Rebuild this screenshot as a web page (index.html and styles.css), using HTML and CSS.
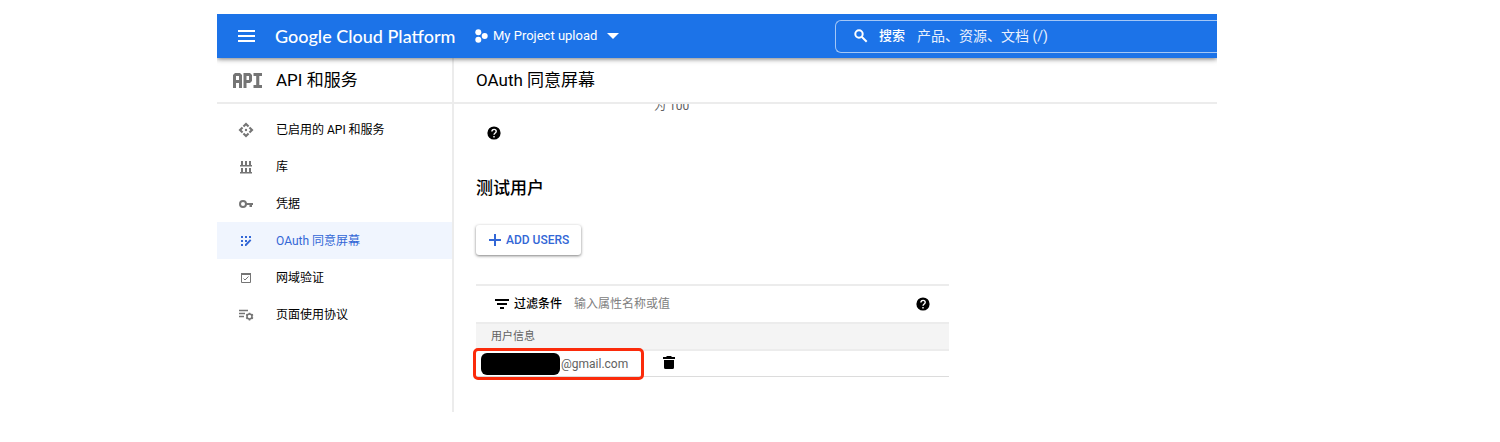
FILE: index.html
```html
<!DOCTYPE html>
<html lang="zh-CN">
<head>
<meta charset="utf-8">
<title>OAuth 同意屏幕</title>
<link rel="stylesheet" href="styles.css">
</head>
<body>
<div class="console">
  <header class="topbar">
    <button class="icon-button menu" aria-label="菜单"><svg width="18" height="14" viewBox="0 0 18 14" fill="currentColor"><path d="M0 1h17v2H0zM0 6h17v2H0zM0 11h17v2H0z"/></svg></button>
    <a class="brand" href="#">Google Cloud Platform</a>
    <button class="project"><svg width="14" height="14" viewBox="0 0 14 14" fill="currentColor"><circle cx="3.300" cy="3.200" r="3"/><circle cx="3.300" cy="10.800" r="3"/><circle cx="9.700" cy="7" r="3"/></svg><span>My Project upload</span><svg class="caret" width="12" height="6" viewBox="0 0 12 6" fill="currentColor"><path d="M0 0h12L6 6z"/></svg></button>
    <div class="search">
      <svg width="14" height="14" viewBox="0 0 14 14" fill="none" stroke="currentColor" stroke-width="2"><circle cx="5" cy="5" r="3.700"/><path d="M7.700 7.700l5 5"/></svg>
      <label for="search">搜索</label>
      <input id="search" type="text" placeholder="产品、资源、文档 (/)">
    </div>
  </header>
  <div class="body">
    <aside class="sidebar">
      <div class="section-title">
        <svg width="30" height="16" viewBox="0 0 30 16" fill="#757575"><path fill-rule="evenodd" d="M0 3l2-2h5l2 2v13H6v-5H3v5H0zM3 4v4h3V4z"/><path fill-rule="evenodd" d="M10.500 1H17l2 2v6l-2 2h-3.500v5h-3zM13.500 4v4H16V4z"/><path d="M20.500 1h8.500v3h-2.700v9H29v3h-8.500v-3h2.700V4h-2.700z"/></svg>
        <h2>API 和服务</h2>
      </div>
      <nav class="nav">
        <a href="#"><svg width="16" height="16" viewBox="0 0 16 16" fill="currentColor"><path d="M8 .5l3.300 3.300-1.500 1.500L8 3.500 6.200 5.300 4.700 3.800zM8 15.500l3.300-3.300-1.500-1.500L8 12.500l-1.800-1.800-1.500 1.500zM.5 8l3.300-3.300 1.500 1.500L3.500 8l1.800 1.800-1.500 1.500zM15.500 8l-3.300-3.300-1.500 1.500L12.500 8l-1.800 1.800 1.500 1.500z"/><circle cx="8" cy="8" r="1.200"/></svg><span>已启用的 API 和服务</span></a>
        <a href="#"><svg width="16" height="16" viewBox="0 0 16 16" fill="currentColor"><path d="M3 2h2v4h2V2h2v4h2V2h2v4h1v1.500H2V6h1zM3 9h2v4h2V9h2v4h2V9h2v4h1v1.500H2V13h1z"/></svg><span>库</span></a>
        <a href="#"><svg width="16" height="16" viewBox="0 0 16 16"><circle cx="5" cy="8" r="3" fill="none" stroke="currentColor" stroke-width="2"/><path d="M7.500 7H15v2h-1v2h-2.500V9h-4z" fill="currentColor"/></svg><span>凭据</span></a>
        <a href="#" class="active" aria-current="page"><svg width="16" height="16" viewBox="0 0 16 16" fill="currentColor"><path d="M3 3h2v2H3zM7 3h2v2H7zM11 3h2v2h-2zM3 7h2v2H3zM7 7h2v2H7zM3 11h2v2H3zM7 11.200L12 6.200l1.400 1.400L8.200 13H7z"/></svg><span>OAuth 同意屏幕</span></a>
        <a href="#"><svg width="16" height="16" viewBox="0 0 16 16" fill="none" stroke="currentColor"><path d="M3.500 3.500h9v9h-9z"/><path d="M3 4h10" stroke-width="2"/><path d="M5.500 8.500L7 10l3.500-3.500"/></svg><span>网域验证</span></a>
        <a href="#"><svg width="16" height="16" viewBox="0 0 16 16" fill="none" stroke="currentColor"><path d="M1 3.500h9M1 6.500h6M1 9.500h5" stroke-width="1.300"/><circle cx="11.500" cy="9.500" r="2.500" stroke-width="1.600"/><path d="M11.500 5.700v1.500M11.500 12v1.500M8.200 7.500l1.300.8M13.600 10.700l1.400.8M8.200 11.500l1.300-.8M13.600 8.300l1.400-.8" stroke-width="1.600"/></svg><span>页面使用协议</span></a>
      </nav>
    </aside>
    <main class="main">
      <div class="page-title"><h1>OAuth 同意屏幕</h1></div>
      <div class="scroll">
        <p class="limit">为 100</p>
        <button class="icon-button help" aria-label="帮助"><svg width="14" height="14" viewBox="0 0 14 14"><circle cx="7" cy="7" r="6.600" fill="#000"/><path d="M4.900 5.500c0-2.900 4.300-2.700 4.300-.1C9.200 7 7 7 7 8.800" fill="none" stroke="#fff" stroke-width="1.400"/><path d="M6.300 10h1.400v1.400H6.300z" fill="#fff"/></svg></button>
        <h2 class="heading">测试用户</h2>
        <button class="add"><svg width="12" height="12" viewBox="0 0 12 12" fill="currentColor"><path d="M5 0h2v5h5v2H7v5H5V7H0V5h5z"/></svg>ADD USERS</button>
        <section class="users">
          <div class="filter">
            <svg width="14" height="10" viewBox="0 0 14 10" fill="currentColor"><path d="M0 0h14v2H0zM2 4h10v2H2zM5 8h4v2H5z"/></svg>
            <label for="filter">过滤条件</label>
            <input id="filter" type="text" placeholder="输入属性名称或值">
            <button class="icon-button" aria-label="帮助"><svg width="14" height="14" viewBox="0 0 14 14"><circle cx="7" cy="7" r="6.600" fill="#000"/><path d="M4.900 5.500c0-2.900 4.300-2.700 4.300-.1C9.200 7 7 7 7 8.800" fill="none" stroke="#fff" stroke-width="1.400"/><path d="M6.300 10h1.400v1.400H6.300z" fill="#fff"/></svg></button>
          </div>
          <table>
            <thead><tr><th colspan="2">用户信息</th></tr></thead>
            <tbody><tr>
              <td class="email"><div class="address"><span class="redacted"></span>@gmail.com</div><span class="marker"></span></td>
              <td><button class="icon-button" aria-label="删除"><svg width="12" height="14" viewBox="0 0 12 14" fill="currentColor"><path d="M4 1h4l1 1h3v2H0V2h3zM1 5h10v7.500q0 1.500-1.500 1.500h-7Q1 14 1 12.500z"/></svg></button></td>
            </tr></tbody>
          </table>
        </section>
      </div>
    </main>
  </div>
</div>
</body>
</html>
```
FILE: styles.css
```css
* { box-sizing: border-box; }
body {
  margin: 0;
  padding: 14px 283px 30px 217px;
  background: #fff;
  color: #000;
  font: 12px/16px Roboto, "Noto Sans CJK SC", sans-serif;
}
h1, h2, p { margin: 0; font-weight: 400; }
svg { display: block; flex: none; }
a { color: inherit; text-decoration: none; }
button, input { font: inherit; color: inherit; border: 0; background: none; padding: 0; }
input { outline: 0; min-width: 0; flex: 1; }
button { cursor: pointer; }

.topbar {
  position: relative;
  display: flex;
  align-items: center;
  height: 44px;
  padding-left: 21px;
  background: #1c73e8;
  color: #fff;
  box-shadow: 0 1px 5px rgba(0, 0, 0, .55);
  clip-path: inset(0 0 -8px 0);
}
.brand { width: 200px; margin-left: 19px; font: 500 18px/24px Lato, sans-serif; white-space: nowrap; }
.project { display: flex; align-items: center; font-size: 13px; white-space: nowrap; }
.project span { margin-left: 4px; }
.caret { margin-left: 10px; }
.search {
  display: flex;
  align-items: center;
  flex: 0 0 382px;
  height: 33px;
  margin-left: auto;
  padding-left: 18px;
  border: 1px solid #a4c7f6;
  border-right: 0;
  border-radius: 6px 0 0 6px;
  font-size: 14px;
}
.search label { margin: 0 12px 0 11px; font-size: 13px; font-weight: 500; }
.search input::placeholder { color: #e8f0fd; opacity: 1; }

.body { display: flex; min-height: 354px; }
.sidebar { flex: 0 0 237px; border-right: 2px solid #ececec; }
.section-title, .page-title {
  display: flex;
  align-items: center;
  height: 46px;
  border-bottom: 2px solid #ececec;
}
.section-title { gap: 13px; padding-left: 16px; }
.page-title { padding-left: 22px; }
h1, h2 { font-size: 17px; line-height: 24px; }
.nav { padding-top: 7px; }
.nav a { display: flex; align-items: center; gap: 22px; height: 37px; padding-left: 21px; }
.nav svg { color: #757575; }
.nav .active, .nav .active svg { color: #3367d6; }
.nav .active { background: #f0f5fe; }

.main { flex: 1; min-width: 0; }
.scroll { padding: 0 0 8px 22px; overflow: hidden; }
.limit { margin: -6px 0 0 178px; color: #616161; }
.help { display: block; margin: 12px 0 0 11px; }
.heading { margin-top: 36px; font-weight: 500; }
.add {
  display: flex;
  align-items: center;
  gap: 5px;
  height: 30px;
  margin-top: 25px;
  padding: 0 12px 0 13px;
  border-radius: 3px;
  color: #3367d6;
  font-weight: 500;
  box-shadow: 0 1px 3px rgba(0, 0, 0, .5);
}
.users { max-width: 473px; margin-top: 29px; }
.filter {
  display: flex;
  align-items: center;
  height: 40px;
  padding: 0 19px;
  border-top: 2px solid #ececec;
  border-bottom: 2px solid #ececec;
}
.filter label { margin: 0 12px 0 5px; font-weight: 500; }
.filter input::placeholder { color: #808080; opacity: 1; }
table { width: 100%; border-collapse: separate; border-spacing: 0; }
th {
  height: 27px;
  padding: 0 15px;
  border-bottom: 2px solid #ececec;
  background: #f4f4f4;
  color: #616161;
  font-size: 11px;
  font-weight: 400;
  text-align: left;
}
td { height: 26px; padding: 0; border-bottom: 1px solid #dcdcdc; }
.email { position: relative; width: 187px; color: #616161; }
.address { display: flex; align-items: center; gap: 1px; padding-left: 5px; }
.redacted { width: 79px; height: 22px; border-radius: 6px; background: #000; }
.marker {
  position: absolute;
  top: -3px;
  left: -3px;
  width: 171px;
  height: 32px;
  border: 3px solid #fb2b0b;
  border-radius: 5px;
}
```
